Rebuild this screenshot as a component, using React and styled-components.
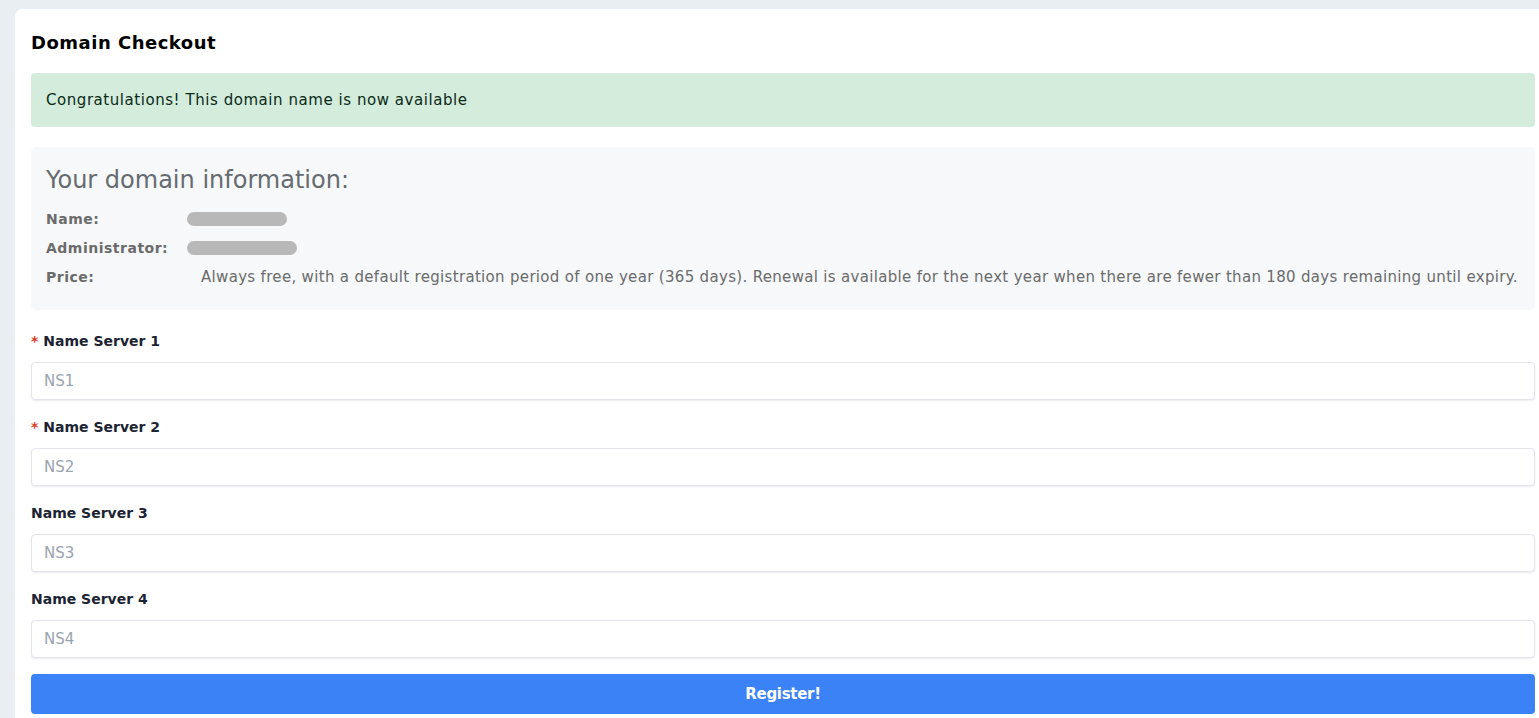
import styled, { createGlobalStyle } from "styled-components";

const GlobalStyle = createGlobalStyle`
  html, body {
    margin: 0;
    padding: 0;
    background: #e9eef3;
    overflow: hidden;
  }
  body {
    font-family: "DejaVu Sans", "Open Sans", sans-serif;
  }
  * {
    box-sizing: border-box;
  }
`;

const Page = styled.div`
  padding: 9px 0 0 15px;
  height: 718px;
`;

const Card = styled.div`
  width: 1536px;
  background: #ffffff;
  border-radius: 8px;
  padding: 20px 16px 16px;
  display: flex;
  flex-direction: column;
`;

const Title = styled.h1`
  margin: 0 0 16px;
  font-size: 18px;
  line-height: 28px;
  font-weight: 700;
  letter-spacing: 0.5px;
  color: #000;
`;

const Alert = styled.div`
  height: 54px;
  display: flex;
  align-items: center;
  padding: 0 15px;
  background: #d4ecdc;
  border-radius: 4px;
  font-size: 15px;
  letter-spacing: 0.55px;
  color: #0b2a17;
  margin-bottom: 20px;
`;

const InfoBox = styled.div`
  background: #f6f8fa;
  border-radius: 5px;
  padding: 15px 15px 19px;
  margin-bottom: 21px;
`;

const InfoHeading = styled.h2`
  margin: 0 0 6px;
  font-size: 24px;
  line-height: 36px;
  font-weight: 400;
  color: #666b70;
`;

const InfoRow = styled.div`
  display: grid;
  grid-template-columns: 155px 1fr;
  align-items: center;
  height: 29px;
`;

const InfoLabel = styled.span`
  font-size: 14px;
  font-weight: 700;
  letter-spacing: 0.5px;
  color: #6b6b6b;
`;

const InfoValue = styled.span`
  font-size: 15px;
  letter-spacing: 0.32px;
  color: #6b6b6b;
  white-space: nowrap;
`;

const Blur = styled.span`
  display: block;
  margin-left: -14px;
  width: ${(p) => p.$w}px;
  height: 14px;
  border-radius: 7px;
  background: #b8b8b8;
`;

const Field = styled.div`
  display: flex;
  flex-direction: column;
  gap: 10px;
  margin-bottom: 17px;

  &:last-of-type {
    margin-bottom: 16px;
  }
`;

const Label = styled.label`
  font-size: 14px;
  line-height: 21px;
  font-weight: 700;
  color: #1c2433;
`;

const Star = styled.span`
  color: #d63a1f;
  margin-right: 5px;
`;

const Input = styled.input`
  height: 38px;
  width: 100%;
  border: 1px solid #e3e5ea;
  border-radius: 4px;
  box-shadow: 0 1px 2px rgba(0, 0, 0, 0.08);
  padding: 0 12px;
  font-family: inherit;
  font-size: 15px;
  color: #333;
  background: #fff;
  outline: none;

  &::placeholder {
    color: #9aa3b0;
  }
`;

const Button = styled.button`
  height: 40px;
  width: 100%;
  border: none;
  border-radius: 4px;
  background: #3b82f6;
  color: #fff;
  font-family: inherit;
  font-size: 15px;
  font-weight: 700;
  letter-spacing: -0.3px;
  cursor: pointer;
`;

const servers = [
  { n: 1, required: true },
  { n: 2, required: true },
  { n: 3, required: false },
  { n: 4, required: false },
];

export default function App() {
  return (
    <>
      <GlobalStyle />
      <Page>
        <Card>
          <Title>Domain Checkout</Title>
          <Alert>Congratulations! This domain name is now available</Alert>
          <InfoBox>
            <InfoHeading>Your domain information:</InfoHeading>
            <InfoRow>
              <InfoLabel>Name:</InfoLabel>
              <Blur $w={100} />
            </InfoRow>
            <InfoRow>
              <InfoLabel>Administrator:</InfoLabel>
              <Blur $w={110} />
            </InfoRow>
            <InfoRow>
              <InfoLabel>Price:</InfoLabel>
              <InfoValue>
                Always free, with a default registration period of one year (365 days). Renewal is
                available for the next year when there are fewer than 180 days remaining until expiry.
              </InfoValue>
            </InfoRow>
          </InfoBox>
          {servers.map((s) => (
            <Field key={s.n}>
              <Label htmlFor={`ns${s.n}`}>
                {s.required && <Star>*</Star>}
                Name Server {s.n}
              </Label>
              <Input id={`ns${s.n}`} placeholder={`NS${s.n}`} />
            </Field>
          ))}
          <Button>Register!</Button>
        </Card>
      </Page>
    </>
  );
}
